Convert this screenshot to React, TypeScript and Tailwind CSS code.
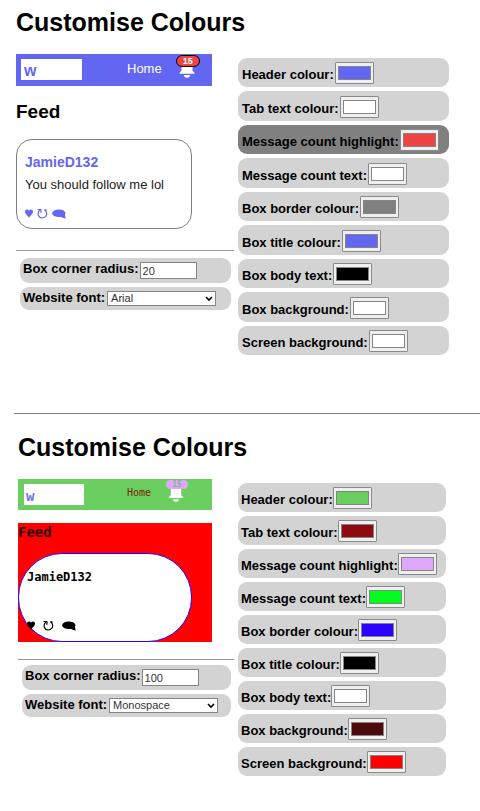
import { useId, useState } from 'react';

const FONTS = ['Arial', 'Monospace', 'Verdana', 'Times New Roman'];

const HeartIcon = () => (
    <svg viewBox="0 0 8 9" className="w-2 h-[9px] shrink-0" fill="currentColor" aria-hidden="true">
        <path d="M4 9C3.300 7 0 5.200 0 2.400 0 .3 3 -.5 4 1.800 5-.5 8 .3 8 2.400 8 5.200 4.700 7 4 9z" />
    </svg>
);

const RepostIcon = () => (
    <svg viewBox="0 0 11 11" className="w-[11px] h-[11px] shrink-0" fill="none" stroke="currentColor" strokeWidth="1.2" aria-hidden="true">
        <path d="M3.600 1.800A4.300 4.300 0 1 0 7.400 1.900L9.600 1.900" />
        <path d="M.6 1.500h3.300v3.200" />
    </svg>
);

const ReplyIcon = () => (
    <svg viewBox="0 0 14 10" className="w-3.5 h-2.5 shrink-0" fill="currentColor" aria-hidden="true">
        <ellipse cx="6.800" cy="4.300" rx="6.600" ry="3.800" />
        <path d="M8 7l5-3c0 2 0 3.800.9 5.400C11.500 9.400 9.500 8.600 8 7z" />
    </svg>
);

const BellIcon = ({ className }: { className: string }) => (
    <svg viewBox="0 0 16 20" className={className} fill="white" aria-hidden="true">
        <path d="M2.500 12.500V6.500C2.500 3 5 1 8 1s5.500 2 5.500 5.500v6l2 2.500v.8H.5V15z" />
        <path d="M4.800 17h6.400c0 1.500-1.400 2.800-3.200 2.800S4.800 18.500 4.800 17z" />
    </svg>
);

interface ColourRowProps {
    label: string;
    value: string;
    rowClass: string;
}

function ColourRow({ label, value, rowClass }: ColourRowProps) {
    const id = useId();
    const [colour, setColour] = useState(value);
    return (
        <div className={`flex items-end rounded-[9px] pb-[3px] ${rowClass}`}>
            <label htmlFor={id} className="text-[13px] leading-[18px] font-bold whitespace-nowrap">
                {label}
            </label>
            <input
                id={id}
                type="color"
                value={colour}
                onChange={(e) => setColour(e.target.value)}
                className="w-[39px] h-[22px] shrink-0 bg-[#efefef] border border-[#8a8a8a] rounded-[1px] [&::-webkit-color-swatch-wrapper]:px-[2px] [&::-webkit-color-swatch-wrapper]:py-[3px] [&::-webkit-color-swatch]:border [&::-webkit-color-swatch]:border-[#858585] [&::-webkit-color-swatch]:rounded-none"
            />
        </div>
    );
}

interface SettingsProps {
    radius: string;
    font: string;
}

function BoxSettings({ radius, font }: SettingsProps) {
    const id = useId();
    return (
        <div className="flex flex-col gap-1 pl-1 pr-[3px]">
            <div className="flex items-start h-[25px] pt-1 pl-[3px] gap-px bg-[#d3d3d3] rounded-[9px]">
                <label htmlFor={`${id}-radius`} className="text-[13px] leading-[13px] font-bold whitespace-nowrap">
                    Box corner radius:
                </label>
                <input
                    id={`${id}-radius`}
                    type="text"
                    defaultValue={radius}
                    className="w-[57px] h-[17px] px-0.5 text-[11px] bg-white border border-[#858585] text-[#333]"
                />
            </div>
            <div className="flex items-start h-[23px] pt-1 pl-[3px] gap-0.5 bg-[#d3d3d3] rounded-[9px]">
                <label htmlFor={`${id}-font`} className="text-[13px] leading-[13px] font-bold whitespace-nowrap">
                    Website font:
                </label>
                <div className="relative w-[109px]">
                    <select
                        id={`${id}-font`}
                        defaultValue={font}
                        className="block appearance-none w-full h-[15px] pl-[3px] text-[11px] leading-[13px] bg-white border border-[#858585] text-[#333]"
                    >
                        {FONTS.map((f) => (
                            <option key={f}>{f}</option>
                        ))}
                    </select>
                    <svg viewBox="0 0 8 6" className="absolute right-[3px] top-[5px] w-2 h-1.5 pointer-events-none" fill="none" stroke="black" strokeWidth="1.6" aria-hidden="true">
                        <path d="M1 1l3 3 3-3" />
                    </svg>
                </div>
            </div>
        </div>
    );
}

const defaultColours = [
    { label: 'Header colour:', value: '#6366f1' },
    { label: 'Tab text colour:', value: '#ffffff' },
    { label: 'Message count highlight:', value: '#ef4444', active: true },
    { label: 'Message count text:', value: '#ffffff' },
    { label: 'Box border colour:', value: '#808080' },
    { label: 'Box title colour:', value: '#6366f1' },
    { label: 'Box body text:', value: '#000000' },
    { label: 'Box background:', value: '#ffffff' },
    { label: 'Screen background:', value: '#ffffff' },
];

const customColours = [
    { label: 'Header colour:', value: '#6bcf5f' },
    { label: 'Tab text colour:', value: '#8f0a10' },
    { label: 'Message count highlight:', value: '#dfa8fa' },
    { label: 'Message count text:', value: '#00ff1a' },
    { label: 'Box border colour:', value: '#2b00ff' },
    { label: 'Box title colour:', value: '#000000' },
    { label: 'Box body text:', value: '#ffffff' },
    { label: 'Box background:', value: '#4d0a0d' },
    { label: 'Screen background:', value: '#ff0000' },
];

function DefaultTheme() {
    return (
        <section className="pt-[7px] pl-4 pr-[31px]">
            <h1 className="text-[25px] leading-[30px] font-bold">Customise Colours</h1>
            <div className="grid grid-cols-[218fr_211fr] gap-1 mt-[17px]">
                <div>
                    {/* Header preview */}
                    <header className="flex h-8 mr-[22px] pl-[5px] bg-[#6366f1]">
                        <div className="w-[61px] h-[21px] mt-[5px] pl-[3px] bg-white text-[16px] leading-[24px] font-bold text-[#6366f1]">
                            w
                        </div>
                        <a href="#home" className="ml-[45px] text-[13px] leading-[30px] text-white">
                            Home
                        </a>
                        <div className="relative ml-[17px] mt-1">
                            <BellIcon className="w-4 h-5" />
                            <span className="absolute -left-[3px] -top-[3px] w-6 h-3 rounded-full border border-black bg-[#ef4444] text-white text-[9px] leading-[11px] font-bold text-center">
                                15
                            </span>
                        </div>
                    </header>
                    <h2 className="mt-[14px] text-[19px] leading-6 font-bold">Feed</h2>
                    <article className="mt-[15px] mr-[42px] h-[90px] pt-[14px] pl-2 border border-[#808080] rounded-[16px]">
                        <h3 className="text-[14px] leading-4 font-bold text-[#6366f1]">JamieD132</h3>
                        <p className="mt-[7px] text-[13px] leading-4 text-[#222] whitespace-nowrap">You should follow me lol</p>
                        <div className="flex items-center gap-1 mt-[15px] text-[#6366f1]">
                            <HeartIcon />
                            <RepostIcon />
                            <ReplyIcon />
                        </div>
                    </article>
                    <hr className="mt-[21px] mb-[7px] border-[#999]" />
                    <BoxSettings radius="20" font="Arial" />
                </div>
                <div className="flex flex-col gap-1 pt-1">
                    {defaultColours.map((c) => (
                        <ColourRow
                            key={c.label}
                            label={c.label}
                            value={c.value}
                            rowClass={`h-[29px] even:h-[30px] pl-1 gap-px ${c.active ? 'bg-[#808080]' : 'bg-[#d3d3d3]'}`}
                        />
                    ))}
                </div>
            </div>
        </section>
    );
}

function CustomTheme() {
    return (
        <section className="pt-[18px] pl-[18px] pr-[34px]">
            <h1 className="text-[25px] leading-[30px] font-bold">Customise Colours</h1>
            <div className="grid grid-cols-[216fr_208fr] gap-1 mt-[17px]">
                <div>
                    <header className="flex h-[31px] mr-[22px] pl-[6px] bg-[#6bcf5f] font-['DejaVu_Sans_Mono',monospace]">
                        <div className="w-[60px] h-[21px] mt-[5px] pl-0.5 bg-white text-[14px] leading-[24px] font-bold text-[#6f74dc]">
                            w
                        </div>
                        <a href="#home" className="ml-[43px] text-[10px] leading-[28px] text-[#7a2010]">
                            Home
                        </a>
                        <div className="relative ml-[17px] mt-1">
                            <BellIcon className="w-4 h-[19px]" />
                            <span className="absolute -left-[2px] -top-[3px] w-[22px] h-[9px] rounded-full bg-[#dfa8fa] text-[#7fb39a] text-[8px] leading-[10px] font-bold text-center">
                                15
                            </span>
                        </div>
                    </header>
                    <div className="mt-[13px] mr-[22px] bg-[#ff0000] font-['DejaVu_Sans_Mono',monospace]">
                        <h2 className="h-[30px] text-[14px] leading-[18px] font-bold text-[#300]">Feed</h2>
                        <article className="mr-5 h-[89px] pt-[15px] pl-2 border border-[#2b00ff] rounded-[44px] bg-white">
                            <h3 className="text-[12px] leading-4 font-bold">JamieD132</h3>
                            <div className="flex items-center gap-2 mt-[35px]">
                                <HeartIcon />
                                <RepostIcon />
                                <ReplyIcon />
                            </div>
                        </article>
                    </div>
                    <hr className="mt-[17px] mb-[5px] border-[#999]" />
                    <BoxSettings radius="100" font="Monospace" />
                </div>
                <div className="flex flex-col gap-1 pt-1">
                    {customColours.map((c) => (
                        <ColourRow key={c.label} label={c.label} value={c.value} rowClass="h-[29px] pl-[3px] bg-[#d3d3d3]" />
                    ))}
                </div>
            </div>
        </section>
    );
}

export default function App() {
    return (
        <main className="min-h-screen bg-white text-black font-['Liberation_Sans',Arial,sans-serif]">
            <DefaultTheme />
            <hr className="mt-[58px] ml-[14px] border-[#808080]" />
            <CustomTheme />
        </main>
    );
}
